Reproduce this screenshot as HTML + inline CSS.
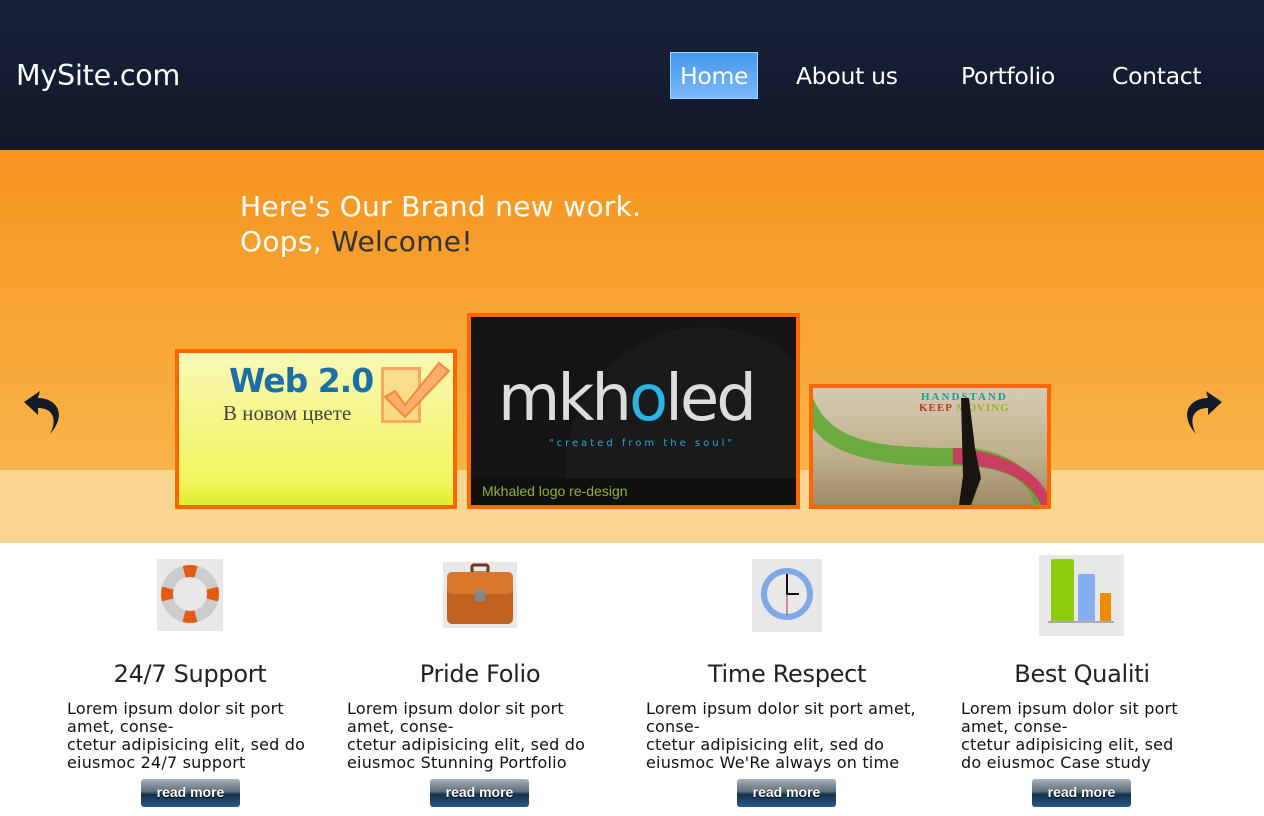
<!DOCTYPE html>
<html><head><meta charset="utf-8">
<style>
*{margin:0;padding:0;box-sizing:border-box}
body{width:1264px;height:816px;overflow:hidden;background:#fff;font-family:"DejaVu Sans","Liberation Sans",sans-serif;position:relative}
.a{position:absolute;white-space:nowrap}
#hdr{position:absolute;left:0;top:0;width:1264px;height:150px;background:linear-gradient(#18233a,#12172a)}
#orange{position:absolute;left:0;top:150px;width:1264px;height:320px;background:linear-gradient(#f7941e,#f8b449)}
#light{position:absolute;left:0;top:470px;width:1264px;height:73px;background:#fad690}
.nav{color:#fff;font-size:23.5px;top:62px;letter-spacing:-0.3px}
.frame{position:absolute;border:4px solid #ff6600;overflow:hidden}
.t{font-size:24px;color:#222;top:660px;text-align:center;width:300px;letter-spacing:-0.3px}
.p{font-size:16px;color:#111;line-height:18px;top:700px;letter-spacing:0.2px}
.btn{position:absolute;top:779px;width:99px;height:28px;border-radius:3px;background:linear-gradient(#a9b3ba 0%,#5c6c78 45%,#13304d 55%,#2a5a86 100%);color:#fff;font:bold 14px "Liberation Sans",sans-serif;text-align:center;line-height:26px;text-shadow:0 1px 1px #000}
.ic{position:absolute;background:#e8e8e8}
</style></head><body>
<div id="hdr"></div>
<div class="a" style="left:16px;top:59px;color:#fff;font-size:28.5px;letter-spacing:-0.2px">MySite.com</div>
<div class="a" style="left:670px;top:52px;width:88px;height:47px;background:linear-gradient(#4497ec,#7ab9fb);border:1px solid #a8d4ff"></div>
<div class="a nav" style="left:680px">Home</div>
<div class="a nav" style="left:796px">About us</div>
<div class="a nav" style="left:961px">Portfolio</div>
<div class="a nav" style="left:1112px">Contact</div>

<div id="orange"></div><div id="light"></div>
<div class="a" style="left:240px;top:189px;color:#fff;font-size:28px;line-height:35px;letter-spacing:0.3px">Here's Our Brand new work.<br>Oops, <span style="color:#333">Welcome!</span></div>

<svg class="a" style="left:22px;top:390px" width="44" height="46" viewBox="0 0 44 46"><path d="M2 12 L18 1 L16 8 C34 8 46 24 28 44 C36 28 30 18 16 18 L16 25 Z" fill="#141a2c"/></svg>
<svg class="a" style="left:1180px;top:390px" width="44" height="46" viewBox="0 0 44 46"><path d="M42 12 L26 1 L28 8 C10 8 -2 24 16 44 C8 28 14 18 28 18 L28 25 Z" fill="#141a2c"/></svg>

<div class="frame" style="left:175px;top:349px;width:282px;height:160px;background:linear-gradient(#f9f9b8,#f2f55c 85%,#e2ea2c)">
 <div class="a" style="left:50px;top:8px;font:bold 33px 'DejaVu Sans',sans-serif;color:#1a6fa6;letter-spacing:-1px">Web 2.0</div>
 <div class="a" style="left:44px;top:48px;font:21px 'Liberation Serif',serif;color:#444">В новом цвете</div>
 <div class="a" style="left:202px;top:14px;width:40px;height:56px;border:3px solid #f5a964;background:rgba(255,180,110,.4)"></div>
 <svg class="a" style="left:200px;top:6px" width="72" height="62"><path d="M6 38 L16 32 L26 46 L60 4 L70 12 L26 58 Z" fill="#fdae6b" stroke="#f08a3c" stroke-width="2"/></svg>
</div>

<div class="frame" style="left:467px;top:313px;width:333px;height:196px;background:#141414">
 <div class="a" style="left:95px;top:10px;width:280px;height:280px;border-radius:50%;background:#1a1a1a"></div>
 <div class="a" style="left:27px;top:45px;font:64px 'DejaVu Sans',sans-serif;color:#ddd;letter-spacing:-3px">mkh<span style="color:#2bb4e8">o</span>led</div>
 <div class="a" style="left:78px;top:121px;font:10px 'DejaVu Sans',sans-serif;color:#2aa7dc;letter-spacing:3px">"created from the soul"</div>
 <div class="a" style="left:0;top:161px;width:325px;height:27px;background:#101010"></div>
 <div class="a" style="left:11px;top:166px;font:14px 'Liberation Sans',sans-serif;color:#8cb33a">Mkhaled logo re-design</div>
</div>

<div class="frame" style="left:809px;top:384px;width:242px;height:125px;background:linear-gradient(#d6cbb3,#bfae8a 60%,#9d8a66)">
 <div class="a" style="left:108px;top:3px;font:bold 11px 'Liberation Serif',serif;color:#1a9c9a;letter-spacing:2px">HANDSTAND</div>
 <div class="a" style="left:106px;top:14px;font:bold 11px 'Liberation Serif',serif;color:#c0392b;letter-spacing:1px">KEEP <span style="color:#9bb326">MOVING</span></div>
 <svg class="a" style="left:0;top:0" width="234" height="117"><path d="M0 10 C20 60 80 60 160 60 C200 65 230 90 234 117 L222 117 C215 90 190 80 150 78 C80 80 20 70 0 40Z" fill="#5aa830" opacity=".85"/><path d="M140 60 C190 62 225 85 234 105 L234 117 L228 117 C215 90 190 78 140 76Z" fill="#e0266a" opacity=".8"/><path d="M148 10 L156 10 L162 60 L168 90 L158 117 L146 117 L150 88Z" fill="#1a1510"/></svg>
</div>

<div class="ic" style="left:157px;top:559px;width:66px;height:72px">
 <svg width="66" height="72"><circle cx="33" cy="35" r="23" fill="none" stroke="#ccc" stroke-width="12"/><circle cx="33" cy="35" r="23" fill="none" stroke="#e45a10" stroke-width="12" stroke-dasharray="12 24.1" stroke-dashoffset="6"/></svg>
</div>
<div class="ic" style="left:443px;top:562px;width:74px;height:66px">
 <svg width="74" height="66"><rect x="29" y="3" width="16" height="8" rx="2" fill="none" stroke="#6a3a18" stroke-width="3"/><rect x="4" y="10" width="66" height="52" rx="5" fill="#c0621f"/><rect x="4" y="10" width="66" height="22" rx="5" fill="#d9782c"/><rect x="32" y="28" width="10" height="11" fill="#7d8c92"/></svg>
</div>
<div class="ic" style="left:752px;top:559px;width:70px;height:73px">
 <svg width="70" height="73"><circle cx="35" cy="35" r="26" fill="#7fa8e6"/><circle cx="35" cy="35" r="20" fill="#e9e9e9"/><path d="M35 15 V35 H47" stroke="#111" stroke-width="2" fill="none"/><path d="M35 35 V56" stroke="#b33" stroke-width="1"/></svg>
</div>
<div class="ic" style="left:1039px;top:555px;width:85px;height:81px">
 <svg width="85" height="81"><rect x="12" y="4" width="23" height="63" rx="2" fill="#8fcc10"/><rect x="39" y="19" width="17" height="48" rx="2" fill="#84aef0"/><rect x="61" y="38" width="11" height="29" rx="1" fill="#f08a00"/><rect x="9" y="66" width="66" height="2" fill="#aaa"/></svg>
</div>

<div class="a t" style="left:40px">24/7 Support</div>
<div class="a t" style="left:330px">Pride Folio</div>
<div class="a t" style="left:637px">Time Respect</div>
<div class="a t" style="left:932px">Best Qualiti</div>

<div class="a p" style="left:67px">Lorem ipsum dolor sit port<br>amet, conse-<br>ctetur adipisicing elit, sed do<br>eiusmoc 24/7 support</div>
<div class="a p" style="left:347px">Lorem ipsum dolor sit port<br>amet, conse-<br>ctetur adipisicing elit, sed do<br>eiusmoc Stunning Portfolio</div>
<div class="a p" style="left:646px">Lorem ipsum dolor sit port amet,<br>conse-<br>ctetur adipisicing elit, sed do<br>eiusmoc We'Re always on time</div>
<div class="a p" style="left:961px">Lorem ipsum dolor sit port<br>amet, conse-<br>ctetur adipisicing elit, sed<br>do eiusmoc Case study</div>

<div class="btn" style="left:141px">read more</div>
<div class="btn" style="left:430px">read more</div>
<div class="btn" style="left:737px">read more</div>
<div class="btn" style="left:1032px">read more</div>
</body></html>
